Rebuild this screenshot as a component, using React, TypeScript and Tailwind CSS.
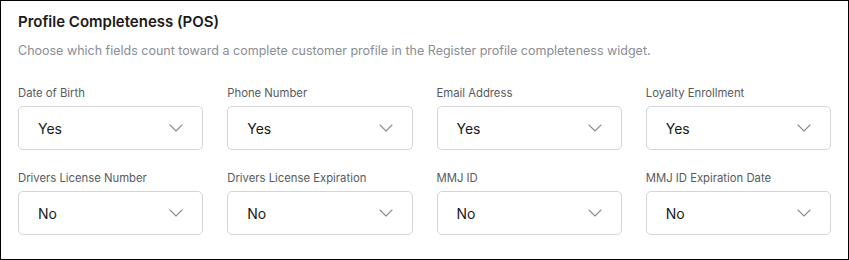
import { ChevronDown } from "lucide-react";

const fields = [
  { label: "Date of Birth", value: "Yes" },
  { label: "Phone Number", value: "Yes" },
  { label: "Email Address", value: "Yes" },
  { label: "Loyalty Enrollment", value: "Yes" },
  { label: "Drivers License Number", value: "No" },
  { label: "Drivers License Expiration", value: "No" },
  { label: "MMJ ID", value: "No" },
  { label: "MMJ ID Expiration Date", value: "No" },
];

export default function App() {
  return (
    <div className="h-[260px] w-[849px] border border-black bg-white px-[17px] pt-[11px] font-['Inter',sans-serif]">
      <h2 className="text-[15px] font-semibold leading-5 text-[#1a1a1a]">Profile Completeness (POS)</h2>
      <p className="mt-[9px] text-[12.5px] leading-5 text-[#8a8d93]">
        Choose which fields count toward a complete customer profile in the Register profile completeness widget.
      </p>

      <div className="mt-6 grid grid-cols-4 gap-x-6 gap-y-5">
        {fields.map((field) => (
          <div key={field.label}>
            <label className="block text-[11.3px] leading-4 text-[#555a60]">{field.label}</label>
            <div className="mt-[5px] flex h-11 items-center justify-between rounded-[5px] border border-[#d3d5d8] pl-[19px] pr-[14px]">
              <span className="text-[14px] text-[#1a1a1a]">{field.value}</span>
              <ChevronDown className="h-6 w-6 text-[#8a8d93]" strokeWidth={1.1} />
            </div>
          </div>
        ))}
      </div>
    </div>
  );
}
